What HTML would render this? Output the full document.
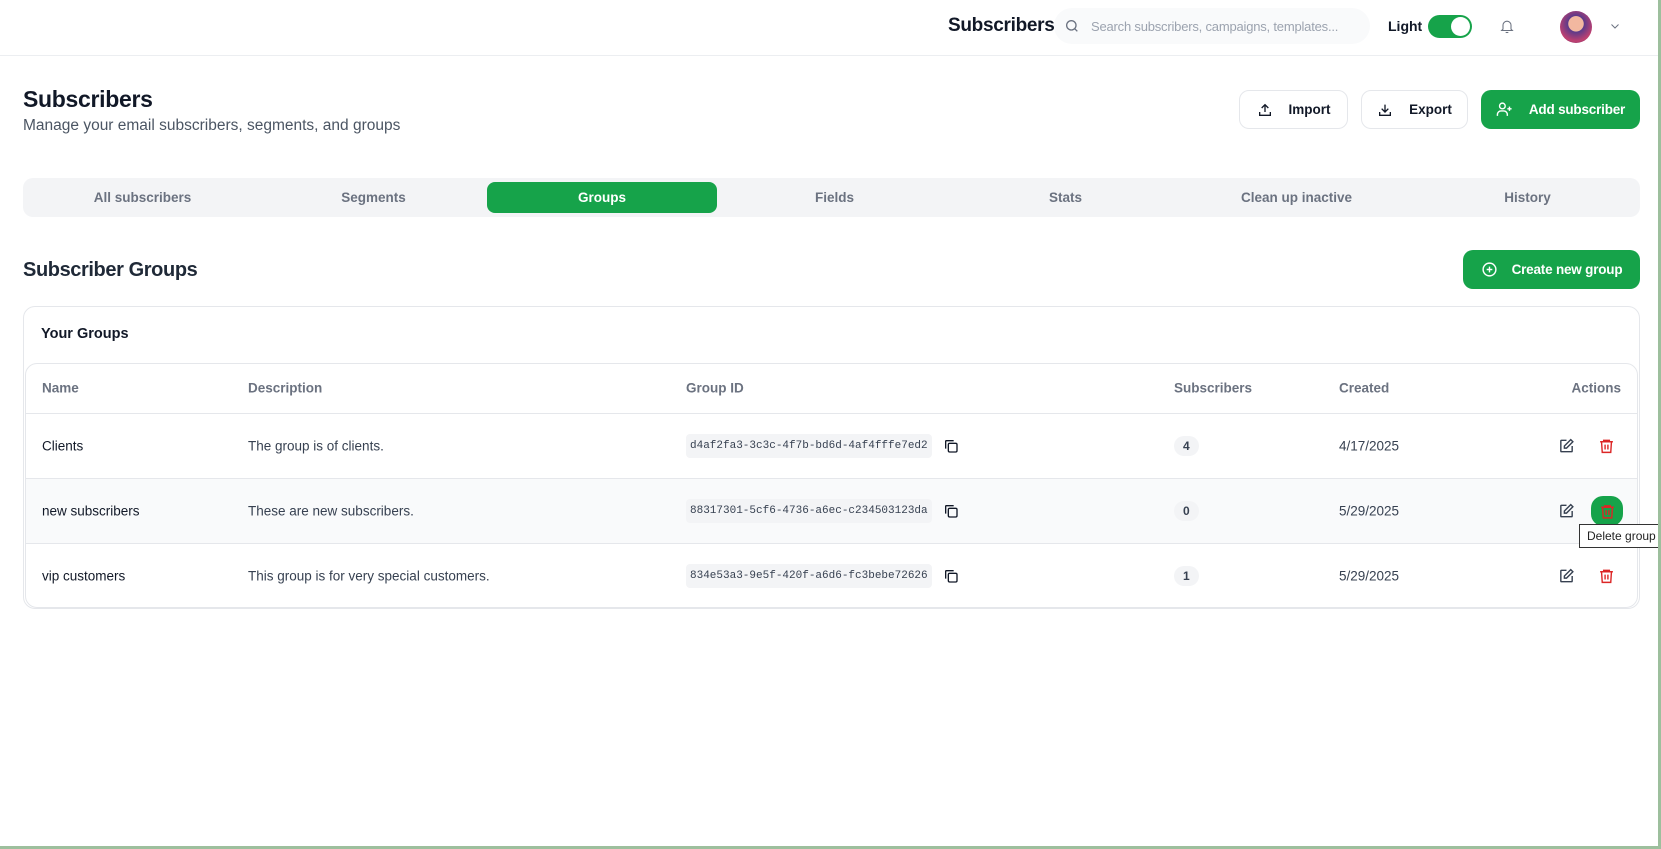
<!DOCTYPE html>
<html><head><meta charset="utf-8"><style>
*{box-sizing:border-box;margin:0;padding:0}
body{width:1661px;height:849px;background:#fff;font-family:"Liberation Sans",sans-serif;color:#111827;position:relative;overflow:hidden}
.a{position:absolute}
.hdr{left:0;top:0;width:1658px;height:56px;border-bottom:1px solid #eceef1}
.btn{position:absolute;border:1px solid #e5e7eb;border-radius:10px;background:#fff;font-size:13.5px;font-weight:bold;display:flex;align-items:center;justify-content:center;gap:16px;color:#111827}
.gbtn{background:#16a34a;color:#fff;border:none}
.tabs{left:23px;top:178px;width:1617px;height:39px;background:#f3f4f6;border-radius:10px}
.tab{position:absolute;top:0;height:39px;width:231px;display:flex;align-items:center;justify-content:center;font-size:13.5px;font-weight:bold;color:#6b7280}
.tab.on{background:#16a34a;color:#fff;top:4px;height:31px;border-radius:8px}
.card{left:23px;top:306px;width:1617px;height:303px;border:1px solid #e5e7eb;border-radius:12px}
.inner{left:25px;top:363px;width:1613px;height:245px;border:1px solid #e5e7eb;border-radius:12px;overflow:hidden}
.row{position:absolute;left:0;width:100%;height:65px;border-top:1px solid #e5e7eb;font-size:13.5px;color:#111827}
.row>*{position:absolute;top:50%;transform:translateY(-50%)}
.th{font-size:13.5px;color:#6b7280;font-weight:bold}
.code{font-family:"Liberation Mono",monospace;font-size:11px;background:#f3f4f6;border-radius:4px;padding:0 4px;height:24px;line-height:24px;color:#374151}
.badge{background:#f3f4f6;border-radius:10px;font-size:12px;font-weight:bold;height:20px;line-height:20px;padding:0 9px;color:#374151}
</style></head><body>
<div class="a hdr"></div>
<div class="a" style="left:948px;top:15px;font-size:19px;font-weight:bold;letter-spacing:-0.3px">Subscribers</div>
<div class="a" style="left:1054px;top:8px;width:316px;height:36px;background:#f9fafb;border-radius:18px"></div>
<svg class="a" style="left:1064px;top:18px" width="16" height="16" viewBox="0 0 24 24" fill="none" stroke="#6b7280" stroke-width="2"><circle cx="11" cy="11" r="7"/><path d="M20 20l-4-4"/></svg>
<div class="a" style="left:1091px;top:19px;font-size:13px;color:#9ca3af;letter-spacing:-0.2px">Search subscribers, campaigns, templates...</div>
<div class="a" style="left:1388px;top:18px;font-size:14px;font-weight:bold">Light</div>
<div class="a" style="left:1428px;top:15px;width:44px;height:23px;background:#16a34a;border-radius:12px"><div class="a" style="left:23px;top:2px;width:19px;height:19px;background:#fff;border-radius:50%"></div></div>
<svg class="a" style="left:1499px;top:18px" width="16" height="17" viewBox="0 0 24 24" fill="none" stroke="#6b7280" stroke-width="1.6"><path d="M6 16V10a6 6 0 0112 0v6l2 2H4z"/><path d="M10 21h4"/></svg>
<div class="a" style="left:1560px;top:11px;width:32px;height:32px;border-radius:50%;background:radial-gradient(circle at 50% 40%,#f2b8a0 0 30%,#5b3a8a 32%,#c04070 70%,#3a2a6a)"></div>
<svg class="a" style="left:1609px;top:20px" width="12" height="12" viewBox="0 0 24 24" fill="none" stroke="#6b7280" stroke-width="2"><path d="M5 9l7 7 7-7"/></svg>

<div class="a" style="left:23px;top:86px;font-size:23px;font-weight:bold;letter-spacing:-0.3px">Subscribers</div>
<div class="a" style="left:23px;top:117px;font-size:15.5px;color:#4b5563">Manage your email subscribers, segments, and groups</div>

<div class="btn" style="left:1239px;top:90px;width:109px;height:39px"><svg width="16" height="16" viewBox="0 0 24 24" fill="none" stroke="#111827" stroke-width="2"><path d="M12 15V4M7 9l5-5 5 5M4 15v5h16v-5"/></svg>Import</div>
<div class="btn" style="left:1361px;top:90px;width:107px;height:39px"><svg width="16" height="16" viewBox="0 0 24 24" fill="none" stroke="#111827" stroke-width="2"><path d="M12 4v11M7 10l5 5 5-5M4 15v5h16v-5"/></svg>Export</div>
<div class="btn gbtn" style="left:1481px;top:90px;width:159px;height:39px;letter-spacing:-0.2px"><svg width="17" height="17" viewBox="0 0 24 24" fill="none" stroke="#fff" stroke-width="2"><circle cx="9" cy="7" r="4"/><path d="M2 21v-2a5 5 0 015-5h4a5 5 0 015 5v2M19 8v6M16 11h6"/></svg>Add subscriber</div>

<div class="a tabs">
<div class="tab" style="left:4px">All subscribers</div>
<div class="tab" style="left:235px">Segments</div>
<div class="tab on" style="left:464px;width:230px">Groups</div>
<div class="tab" style="left:696px">Fields</div>
<div class="tab" style="left:927px">Stats</div>
<div class="tab" style="left:1158px">Clean up inactive</div>
<div class="tab" style="left:1389px">History</div>
</div>

<div class="a" style="left:23px;top:259px;font-size:20px;font-weight:bold;letter-spacing:-0.4px;color:#1f2937">Subscriber Groups</div>
<div class="btn gbtn" style="left:1463px;top:250px;width:177px;height:39px;gap:14px;letter-spacing:-0.2px"><svg width="17" height="17" viewBox="0 0 24 24" fill="none" stroke="#fff" stroke-width="2"><circle cx="12" cy="12" r="9"/><path d="M12 8v8M8 12h8"/></svg>Create new group</div>

<div class="a card"></div>
<div class="a" style="left:41px;top:326px;font-size:14.5px;font-weight:bold">Your Groups</div>
<div class="a inner">
<div class="row" style="top:-1px;height:50px;border-top:none">
<span class="th" style="left:16px">Name</span><span class="th" style="left:222px">Description</span><span class="th" style="left:660px">Group ID</span><span class="th" style="left:1148px">Subscribers</span><span class="th" style="left:1313px">Created</span><span class="th" style="right:16px">Actions</span></div>

<div class="row" style="top:49px">
<span style="left:16px">Clients</span><span style="left:222px;color:#374151">The group is of clients.</span><span class="code" style="left:660px">d4af2fa3-3c3c-4f7b-bd6d-4af4fffe7ed2</span>
<svg style="left:917px" width="16" height="16" viewBox="0 0 24 24" fill="none" stroke="#111827" stroke-width="2"><rect x="8" y="8" width="13" height="13" rx="2"/><path d="M4 16V5a1 1 0 011-1h11"/></svg>
<span class="badge" style="left:1148px">4</span><span style="left:1313px;color:#374151">4/17/2025</span>
<svg style="left:1532px" width="17" height="17" viewBox="0 0 24 24" fill="none" stroke="#374151" stroke-width="2"><path d="M12 4H5a1 1 0 00-1 1v14a1 1 0 001 1h14a1 1 0 001-1v-7"/><path d="M18 3l3 3-9 9H9v-3z"/></svg>
<svg style="left:1572px" width="17" height="17" viewBox="0 0 24 24" fill="none" stroke="#dc2626" stroke-width="2"><path d="M3 6h18M8 6V4h8v2M5 6l1 15h12l1-15M10 10v7M14 10v7"/></svg></div>

<div class="row" style="top:114px;background:#f9fafb">
<span style="left:16px">new subscribers</span><span style="left:222px;color:#374151">These are new subscribers.</span><span class="code" style="left:660px">88317301-5cf6-4736-a6ec-c234503123da</span>
<svg style="left:917px" width="16" height="16" viewBox="0 0 24 24" fill="none" stroke="#111827" stroke-width="2"><rect x="8" y="8" width="13" height="13" rx="2"/><path d="M4 16V5a1 1 0 011-1h11"/></svg>
<span class="badge" style="left:1148px">0</span><span style="left:1313px;color:#374151">5/29/2025</span>
<svg style="left:1532px" width="17" height="17" viewBox="0 0 24 24" fill="none" stroke="#374151" stroke-width="2"><path d="M12 4H5a1 1 0 00-1 1v14a1 1 0 001 1h14a1 1 0 001-1v-7"/><path d="M18 3l3 3-9 9H9v-3z"/></svg>
<span style="left:1565px;width:32px;height:30px;border-radius:12px;background:#16a34a;display:flex;align-items:center;justify-content:center"><svg width="17" height="17" viewBox="0 0 24 24" fill="none" stroke="#dc2626" stroke-width="2"><path d="M3 6h18M8 6V4h8v2M5 6l1 15h12l1-15M10 10v7M14 10v7"/></svg></span></div>

<div class="row" style="top:179px">
<span style="left:16px">vip customers</span><span style="left:222px;color:#374151">This group is for very special customers.</span><span class="code" style="left:660px">834e53a3-9e5f-420f-a6d6-fc3bebe72626</span>
<svg style="left:917px" width="16" height="16" viewBox="0 0 24 24" fill="none" stroke="#111827" stroke-width="2"><rect x="8" y="8" width="13" height="13" rx="2"/><path d="M4 16V5a1 1 0 011-1h11"/></svg>
<span class="badge" style="left:1148px">1</span><span style="left:1313px;color:#374151">5/29/2025</span>
<svg style="left:1532px" width="17" height="17" viewBox="0 0 24 24" fill="none" stroke="#374151" stroke-width="2"><path d="M12 4H5a1 1 0 00-1 1v14a1 1 0 001 1h14a1 1 0 001-1v-7"/><path d="M18 3l3 3-9 9H9v-3z"/></svg>
<svg style="left:1572px" width="17" height="17" viewBox="0 0 24 24" fill="none" stroke="#dc2626" stroke-width="2"><path d="M3 6h18M8 6V4h8v2M5 6l1 15h12l1-15M10 10v7M14 10v7"/></svg></div>
</div>

<div class="a" style="left:1579px;top:524px;width:120px;height:24px;background:#fff;border:1px solid #333;font-size:12px;line-height:22px;padding-left:7px;color:#222">Delete group</div>
<div class="a" style="left:1658px;top:0;width:3px;height:849px;background:#9dbf9d"></div>
<div class="a" style="left:0;top:846px;width:1661px;height:3px;background:#9dbf9d"></div>
</body></html>
